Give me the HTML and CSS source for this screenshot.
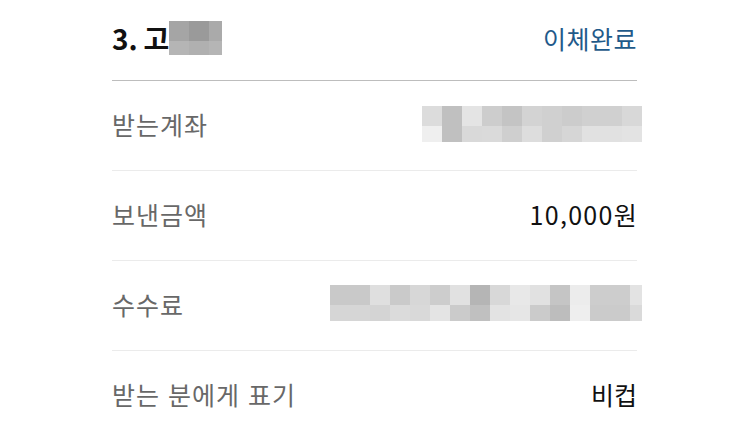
FILE: index.html
```html
<!DOCTYPE html>
<html lang="ko">
<head>
<meta charset="utf-8">
<link rel="stylesheet" href="styles.css">
</head>
<body>
<div class="wrap">
  <div class="head">
    <div class="title">3. 고<span class="mosaic m-head"><span class="g1"></span><span class="g2"></span><span class="g3 narrow"></span><span class="g4"></span><span class="g5"></span><span class="g4 narrow"></span></span></div>
    <div class="status">이체완료</div>
  </div>
  <div class="row">
    <div class="label">받는계좌</div>
    <div class="mosaic m-acct">
      <span class="a1"></span><span class="a2"></span><span class="a3"></span><span class="a4"></span><span class="a5"></span><span class="a6"></span><span class="a7"></span><span class="a8"></span><span class="a7"></span><span class="a7"></span><span class="a9"></span>
      <span class="b1"></span><span class="b2"></span><span class="b3"></span><span class="b4"></span><span class="b5"></span><span class="b6"></span><span class="b7"></span><span class="b8"></span><span class="b9"></span><span class="b9"></span><span class="b10"></span>
    </div>
  </div>
  <div class="row">
    <div class="label">보낸금액</div>
    <div class="value num">10,000원</div>
  </div>
  <div class="row">
    <div class="label">수수료</div>
    <div class="mosaic m-fee">
      <span class="f1"></span><span class="f1"></span><span class="f2"></span><span class="f3"></span><span class="f4"></span><span class="f5"></span><span class="f6"></span><span class="f7"></span><span class="f8"></span><span class="f9"></span><span class="f6"></span><span class="f10"></span><span class="f11"></span><span class="f5"></span><span class="f5"></span><span class="f12 narrow"></span>
      <span class="h1"></span><span class="h1"></span><span class="h2"></span><span class="h3"></span><span class="h4"></span><span class="h5"></span><span class="h6"></span><span class="h7"></span><span class="h8"></span><span class="h9"></span><span class="h6"></span><span class="h10"></span><span class="h11"></span><span class="h6"></span><span class="h6"></span><span class="h12 narrow"></span>
    </div>
  </div>
  <div class="row last">
    <div class="label">받는 분에게 표기</div>
    <div class="value">비컵</div>
  </div>
</div>
</body>
</html>
```
FILE: styles.css
```css
html, body {
  margin: 0;
  padding: 0;
  background: #fff;
}
body {
  font-family: "Noto Sans CJK KR", "Noto Sans", sans-serif;
}
.wrap {
  width: 525px;
  margin-left: 112px;
}
.head {
  height: 80px;
  display: flex;
  align-items: center;
  justify-content: space-between;
  border-bottom: 1px solid #bdbdbd;
}
.title {
  display: flex;
  align-items: center;
  font-size: 28px;
  font-weight: 700;
  color: #111;
  margin-top: -4px;
  word-spacing: -2px;
}
.status {
  font-size: 25px;
  color: #1f5a8a;
  margin-top: -4px;
  letter-spacing: 0.5px;
}
.row {
  height: 89px;
  display: flex;
  align-items: center;
  justify-content: space-between;
  border-bottom: 1px solid #ebebeb;
}
.row.last {
  border-bottom: none;
}
.label {
  font-size: 25px;
  color: #686868;
  letter-spacing: 1px;
  margin-top: -4px;
}
.value {
  font-size: 25px;
  color: #111;
  margin-top: -4px;
}
.value.num {
  letter-spacing: 1.3px;
  margin-right: -1px;
}
.mosaic {
  display: grid;
}
.mosaic span {
  display: block;
}
.m-head {
  grid-template-columns: 20px 20px 13px;
  grid-template-rows: 20px 14px;
  margin-left: 0;
}
.m-acct {
  grid-template-columns: repeat(11, 20px);
  grid-template-rows: 20px 16px;
  margin-right: -5px;
  margin-top: -4px;
}
.m-fee {
  grid-template-columns: repeat(15, 20px) 12px;
  grid-template-rows: 20px 16px;
  margin-right: -5px;
  margin-top: -6px;
}
.g1 { background: #a5a5a5; }
.g2 { background: #9a9a9a; }
.g3 { background: #aaaaaa; }
.g4 { background: #b5b5b5; }
.g5 { background: #b0b0b0; }

.a1 { background: #dcdcdc; }
.a2 { background: #c0c0c0; }
.a3 { background: #e4e4e4; }
.a4 { background: #cdcdcd; }
.a5 { background: #c4c4c4; }
.a6 { background: #d3d3d3; }
.a7 { background: #d0d0d0; }
.a8 { background: #cccccc; }
.a9 { background: #d8d8d8; }
.b1 { background: #efefef; }
.b2 { background: #c0c0c0; }
.b3 { background: #d9d9d9; }
.b4 { background: #dadada; }
.b5 { background: #cfcfcf; }
.b6 { background: #dddddd; }
.b7 { background: #d0d0d0; }
.b8 { background: #d6d6d6; }
.b9 { background: #e1e1e1; }
.b10 { background: #e3e3e3; }

.f1 { background: #c9c9c9; }
.f2 { background: #dfdfdf; }
.f3 { background: #cacaca; }
.f4 { background: #d7d7d7; }
.f5 { background: #cdcdcd; }
.f6 { background: #e1e1e1; }
.f7 { background: #b5b5b5; }
.f8 { background: #d8d8d8; }
.f9 { background: #e8e8e8; }
.f10 { background: #c5c5c5; }
.f11 { background: #ececec; }
.f12 { background: #e3e3e3; }
.h1 { background: #d6d6d6; }
.h2 { background: #d4d4d4; }
.h3 { background: #dbdbdb; }
.h4 { background: #d9d9d9; }
.h5 { background: #e4e4e4; }
.h6 { background: #cbcbcb; }
.h7 { background: #c0c0c0; }
.h8 { background: #e3e3e3; }
.h9 { background: #e6e6e6; }
.h10 { background: #bdbdbd; }
.h11 { background: #eeeeee; }
.h12 { background: #dadada; }
```
